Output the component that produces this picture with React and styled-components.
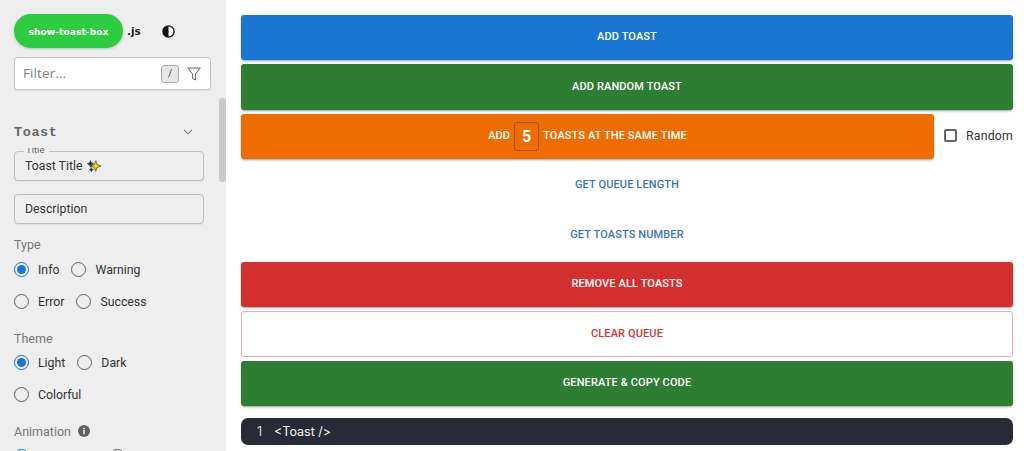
import React from 'react'
import styled, { createGlobalStyle } from 'styled-components'

const Global = createGlobalStyle`
html, body {
  margin: 0;
  height: 100%;
  overflow: hidden;
  background: #fff;
  font-family: Roboto, "Liberation Sans", sans-serif;
}
* { box-sizing: border-box; }
`

const Page = styled.div`
display: flex;
width: 1024px;
height: 451px;
overflow: hidden;
`

const Sidebar = styled.aside`
position: relative;
flex: 0 0 226px;
height: 451px;
overflow: hidden;
background: #eeeeee;
padding: 14px 0 0 14px;
`

const ScrollThumb = styled.div`
position: absolute;
top: 98px;
right: 0;
width: 7px;
height: 84px;
border-radius: 4px;
background: #c9c9c9;
`

const Brand = styled.div`
display: flex;
align-items: center;
height: 34px;
`

const Logo = styled.div`
width: 109px;
height: 34px;
border-radius: 17px;
background: #2ecc40;
box-shadow: 0 1px 3px rgba(0, 0, 0, 0.2);
color: #fff;
font-family: "DejaVu Sans", sans-serif;
font-size: 9.2px;
font-weight: 700;
display: flex;
align-items: center;
justify-content: center;
`

const Ext = styled.span`
margin-left: 4px;
font-family: "DejaVu Sans", sans-serif;
font-size: 10.5px;
font-weight: 700;
color: #222;
`

const ThemeIcon = styled.svg`
margin-left: 21px;
width: 13px;
height: 13px;
`

const FilterBox = styled.div`
display: flex;
align-items: center;
width: 197px;
height: 33px;
margin-top: 9px;
padding: 0 9px 0 8px;
background: #fff;
border: 1px solid #c8c8c8;
border-radius: 3px;
box-shadow: 0 1px 1px rgba(0, 0, 0, 0.08);
`

const FilterText = styled.span`
flex: 1;
padding-bottom: 1px;
font-family: "Open Sans", sans-serif;
font-size: 13.5px;
letter-spacing: 0.1px;
color: #808080;
`

const Kbd = styled.span`
width: 18px;
height: 18px;
margin-right: 8px;
border: 1px solid #aaa;
border-radius: 3px;
background: #e6e6e6;
color: #444;
font-size: 10px;
display: flex;
align-items: center;
justify-content: center;
`

const SectionHead = styled.div`
display: flex;
align-items: center;
justify-content: space-between;
width: 179px;
height: 20px;
margin-top: 32px;
`

const SectionTitle = styled.span`
font-family: "Liberation Mono", monospace;
font-size: 13.5px;
font-weight: 700;
letter-spacing: 0.6px;
color: #666;
`

const Field = styled.div`
position: relative;
display: flex;
align-items: center;
gap: 4px;
width: 190px;
height: 30px;
margin-top: ${p => p.$top}px;
padding-left: 10px;
border: 1px solid #bdbdbd;
border-radius: 4px;
box-shadow: 0 1px 1px rgba(0, 0, 0, 0.06);
font-size: 12.3px;
color: #333;
`

const FieldLabel = styled.span`
position: absolute;
top: -4px;
left: 9px;
height: 6px;
padding: 0 5px 0 2px;
overflow: hidden;
background: #eeeeee;
font-size: 9.5px;
line-height: 4px;
color: #666;
`

const GroupLabel = styled.div`
display: flex;
align-items: center;
gap: 7px;
height: 16px;
margin-top: ${p => p.$top}px;
font-size: 12.5px;
color: #777;
`

const RadioRow = styled.div`
display: flex;
align-items: center;
height: 16px;
margin-top: ${p => p.$top}px;
`

const RadioItem = styled.label`
display: flex;
align-items: center;
margin-right: ${p => p.$gap}px;
font-size: 12.3px;
color: #333;
`

const RadioText = styled.span`
padding-top: 1px;
`

const RadioCircle = styled.span`
position: relative;
flex: none;
width: 15px;
height: 15px;
margin-right: 9px;
border-radius: 50%;
border: 1.5px solid ${p => (p.$on ? '#1976d2' : '#616161')};

&::after {
  content: '';
  display: ${p => (p.$on ? 'block' : 'none')};
  position: absolute;
  inset: 2px;
  border-radius: 50%;
  background: #1976d2;
}
`

const Main = styled.main`
flex: 1;
display: flex;
flex-direction: column;
gap: 4px;
padding: 15px 11px 0 15px;
`

const Button = styled.button`
flex: ${p => (p.$grow ? '1 1 0' : 'none')};
min-width: 0;
display: flex;
align-items: center;
justify-content: center;
width: 100%;
height: 45.4px;
padding: 0 0 2px;
border: ${p => (p.$outline ? '1px solid rgba(211, 47, 47, 0.4)' : 'none')};
border-radius: 3px;
background: ${p => p.$bg || 'transparent'};
box-shadow: ${p =>
  p.$bg ? '0 2px 2px -1px rgba(0,0,0,.25), 0 1px 3px rgba(0,0,0,.15)' : 'none'};
color: ${p => p.$color || '#fff'};
font-family: Roboto, sans-serif;
font-size: 11px;
font-weight: 500;
letter-spacing: 0.12px;
text-transform: uppercase;
`

const OrangeRow = styled.div`
flex: none;
display: flex;
align-items: center;
height: 45.4px;
`

const CountBox = styled.span`
width: 25px;
height: 29px;
margin: 2px 4px 0;
border: 1px solid #a84f0a;
border-radius: 3px;
color: #fff;
font-size: 16px;
font-weight: 700;
display: flex;
align-items: center;
justify-content: center;
`

const RandomLabel = styled.label`
flex: none;
display: flex;
align-items: center;
margin-left: 10px;
padding-bottom: 1px;
font-size: 12.3px;
letter-spacing: 0.2px;
color: #333;
`

const CheckBox = styled.span`
width: 13px;
height: 13px;
margin-right: 9px;
border: 2px solid #666;
border-radius: 2px;
`

const CodeBlock = styled.div`
flex: none;
display: flex;
align-items: center;
height: 27px;
margin-top: 8px;
padding-left: 16px;
border-radius: 7px;
background: #282a36;
color: #f8f8f2;
font-family: Inter, sans-serif;
font-size: 12.5px;
`

const LineNo = styled.span`
margin-right: 12px;
color: #d8d8d8;
`

const Sparkle = () => (
  <svg width="14" height="14" viewBox="0 0 16 16">
    <path d="M4 1l1.4 3L8 5.4 5.4 7 4 10 2.6 7 0 5.4 2.6 4z" fill="#2b3a4a" />
    <path d="M5 9l1 2 2 1-2 1-1 2-1-2-2-1 2-1z" fill="#2b3a4a" />
    <path d="M10 2l1.6 4.2L16 8l-4.4 1.8L10 14 8.4 9.8 4 8l4.4-1.8z" fill="#f2d21f" stroke="#4a4010" strokeWidth=".8" />
  </svg>
)

const Radio = ({ on, gap = 12, children }) => (
  <RadioItem $gap={gap}>
    <RadioCircle $on={on} />
    <RadioText>{children}</RadioText>
  </RadioItem>
)

const App = () => (
  <Page>
    <Global />
    <Sidebar>
      <Brand>
        <Logo>show-toast-box</Logo>
        <Ext>.js</Ext>
        <ThemeIcon viewBox="0 0 14 14">
          <circle cx="7" cy="7" r="6" fill="#fff" stroke="#111" strokeWidth="1.4" />
          <path d="M7 1a6 6 0 0 0 0 12z" fill="#111" />
        </ThemeIcon>
      </Brand>
      <FilterBox>
        <FilterText>Filter...</FilterText>
        <Kbd>/</Kbd>
        <svg width="14" height="14" viewBox="0 0 14 14" fill="none" stroke="#666" strokeWidth="1">
          <path d="M.7 1h12.6L8.4 7v6L5.6 11.5V7z" />
        </svg>
      </FilterBox>
      <SectionHead>
        <SectionTitle>Toast</SectionTitle>
        <svg width="10" height="6" viewBox="0 0 10 6" fill="none" stroke="#777" strokeWidth="1.1">
          <path d="M1 .8l4 4 4-4" />
        </svg>
      </SectionHead>
      <Field $top={9}>
        <FieldLabel>Title</FieldLabel>
        Toast Title <Sparkle />
      </Field>
      <Field $top={13}>Description</Field>
      <GroupLabel $top={12}>Type</GroupLabel>
      <RadioRow $top={9}>
        <Radio on>Info</Radio>
        <Radio>Warning</Radio>
      </RadioRow>
      <RadioRow $top={16}>
        <Radio>Error</Radio>
        <Radio>Success</Radio>
      </RadioRow>
      <GroupLabel $top={21}>Theme</GroupLabel>
      <RadioRow $top={8}>
        <Radio on>Light</Radio>
        <Radio>Dark</Radio>
      </RadioRow>
      <RadioRow $top={16}>
        <Radio>Colorful</Radio>
      </RadioRow>
      <GroupLabel $top={21}>
        Animation
        <svg width="12" height="12" viewBox="0 0 12 12">
          <circle cx="6" cy="6" r="6" fill="#616161" />
          <rect x="5.2" y="5" width="1.6" height="4.2" fill="#eee" />
          <rect x="5.2" y="2.8" width="1.6" height="1.4" fill="#eee" />
        </svg>
      </GroupLabel>
      <RadioRow $top={9}>
        <Radio on gap={31}>Bounce</Radio>
        <Radio>Slide</Radio>
      </RadioRow>
      <ScrollThumb />
    </Sidebar>
    <Main>
      <Button $bg="#1976d2">Add toast</Button>
      <Button $bg="#2e7d32">Add random toast</Button>
      <OrangeRow>
        <Button $grow $bg="#ef6c00">
          Add <CountBox>5</CountBox> toasts at the same time
        </Button>
        <RandomLabel>
          <CheckBox />
          Random
        </RandomLabel>
      </OrangeRow>
      <Button $color="#3a76b4">Get queue length</Button>
      <Button $color="#3a76b4">Get toasts number</Button>
      <Button $bg="#d32f2f">Remove all toasts</Button>
      <Button $outline $color="#c63a3a">Clear queue</Button>
      <Button $bg="#2e7d32">Generate &amp; copy code</Button>
      <CodeBlock>
        <LineNo>1</LineNo>
        {'<Toast />'}
      </CodeBlock>
    </Main>
  </Page>
)

export default App
